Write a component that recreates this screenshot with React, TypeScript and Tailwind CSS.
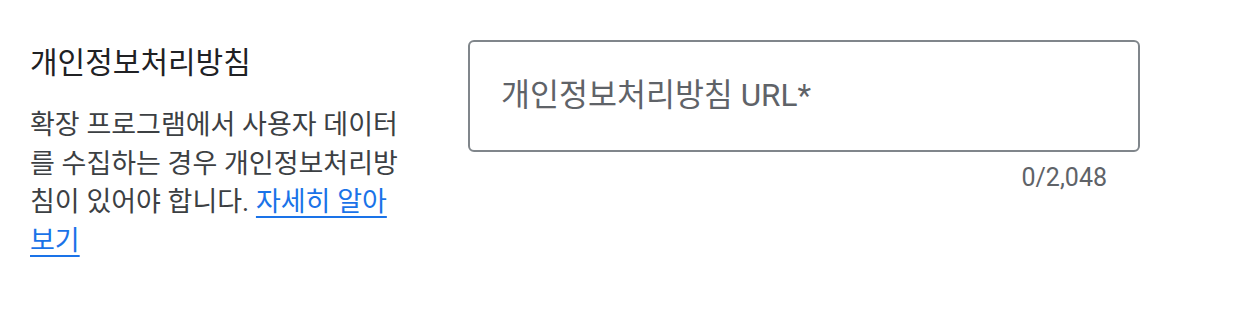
export default function App() {
  const font = { fontFamily: "Roboto, 'Noto Sans CJK KR', sans-serif" };
  return (
    <div className="w-[1234px] h-[316px] bg-white flex pt-[40px] pl-[30px]" style={font}>
      <div className="w-[380px] shrink-0">
        <h2 className="text-[30px] leading-[40px] font-normal text-[#202124] mt-[3px]">개인정보처리방침</h2>
        <p className="mt-[23px] text-[27px] leading-[38.5px] text-[#3c4043]">
          확장 프로그램에서 사용자 데이터를 수집하는 경우 개인정보처리방침이 있어야 합니다.{" "}
          <a href="#" className="text-[#1a73e8] underline underline-offset-[5px] decoration-[1.5px]">자세히 알아보기</a>
        </p>
      </div>
      <div className="ml-[58px] w-[672px] shrink-0">
        <div className="h-[112px] border-[2px] border-[#80868b] rounded-[6px] flex items-center pl-[31px]">
          <span className="text-[31.5px] text-[#5f6368]">개인정보처리방침 URL*</span>
        </div>
        <div className="text-right pr-[33px] mt-[12px] text-[25px] leading-[28px] text-[#5f6368]">0/2,048</div>
      </div>
    </div>
  );
}
